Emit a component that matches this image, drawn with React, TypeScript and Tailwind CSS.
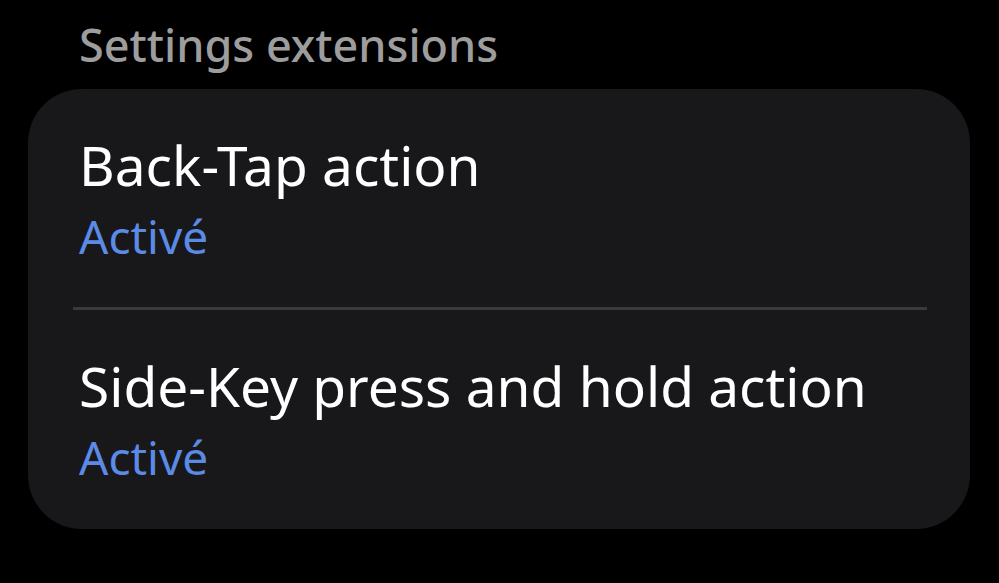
export default function App() {
  const rows = [
    { title: 'Back-Tap action', status: 'Activé' },
    { title: 'Side-Key press and hold action', status: 'Activé' },
  ];

  return (
    <div
      className="w-[999px] h-[583px] bg-black overflow-hidden"
      style={{ fontFamily: '"Noto Sans", "Open Sans", sans-serif' }}
    >
      {/* Section header */}
      <div className="pl-[79px] pt-[18px] h-[89px]">
        <h2 className="text-[45px] leading-[54px] font-medium text-[#9d9d9d]">Settings extensions</h2>
      </div>

      {/* Card */}
      <div className="ml-[28px] w-[942px] h-[440px] rounded-[54px] bg-[#18181a] flex flex-col">
        {rows.map((row, i) => (
          <div key={row.title} className="flex flex-col">
            {i > 0 && <div className="ml-[45px] mr-[43px] h-[3px] bg-[#3a3a3c]" />}
            <div className="pl-[51px] pt-[44px] h-[218px]">
              <p className="text-[55px] leading-[64px] text-white">{row.title}</p>
              <p className="mt-[11px] text-[46px] leading-[56px] text-[#5b8be6]">{row.status}</p>
            </div>
          </div>
        ))}
      </div>
    </div>
  );
}
